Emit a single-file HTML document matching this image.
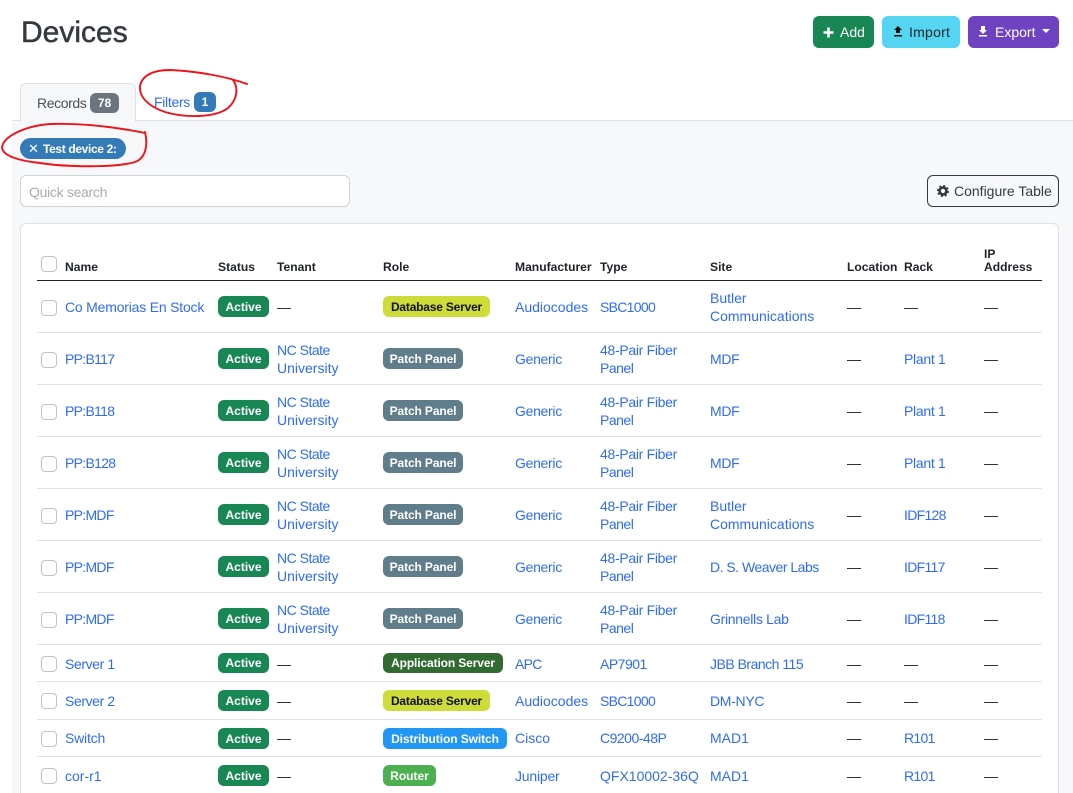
<!DOCTYPE html>
<html><head><meta charset="utf-8"><title>Devices</title>
<style>
html,body{margin:0;padding:0;background:#fff;overflow:hidden;height:793px;width:1073px}
body{position:relative;font:14px/18px "Liberation Sans",sans-serif;color:#343a40}
div,a,b,span{position:absolute;white-space:nowrap}
i{font-style:normal}
a{color:#2f6cf4;text-decoration:none}
.bg{left:12px;top:121px;width:1061px;height:672px;background:#f7f8fa}
.line{left:37px;width:1005px;height:1px;background:#dee2e6}
.cb{left:41px;width:14px;height:14px;border:1px solid #bfc3c8;border-radius:4px;background:#fff}
.th{font-weight:bold;font-size:12.1px;line-height:13px;color:#212529}
.bd{height:21px;line-height:22px;border-radius:6px;font-weight:bold;font-size:12px;color:#fff;text-align:center}
.ac{left:218px;width:51px;background:#198754}
.pp{left:383px;width:80px;background:#607d8b;letter-spacing:-.12px}
.db{left:383px;width:107px;background:#cddc39;color:#111;letter-spacing:-.2px}
.d{color:#212529}
.btn{height:32px;line-height:32px;top:16px;border-radius:6px;font-size:14px}
.s2{letter-spacing:-.2px}.s3{letter-spacing:-.3px}.s4{letter-spacing:-.4px}.s5{letter-spacing:-.5px}.s7{letter-spacing:-.7px}
</style></head><body>
<div class="bg"></div>
<div style="left:12px;top:120px;width:1061px;height:1px;background:#dee2e6"></div>
<div style="left:21px;top:5px;font-size:30px;line-height:56px;color:#343a40;-webkit-text-stroke:.5px #343a40">Devices</div>

<div class="btn" style="left:813px;width:61px;background:#198754;color:#fff"><svg style="position:absolute;left:10px;top:11px" width="11" height="11" viewBox="0 0 11 11"><path d="M5.5 .5V10.5M.5 5.5H10.5" stroke="#fff" stroke-width="2.6"/></svg><span style="left:27px;top:0">Add</span></div>
<div class="btn" style="left:882px;width:78px;background:#54d6f2;color:#212529"><svg style="position:absolute;left:11px;top:10px" width="10" height="12" viewBox="0 0 10 12"><path d="M5 0L9 4H7V7H3V4H1ZM1 9H9V10.5H1Z" fill="#111"/></svg><span style="left:27px;top:0;letter-spacing:.25px">Import</span></div>
<div class="btn" style="left:968px;width:91px;background:#6f42c1;color:#fff"><svg style="position:absolute;left:10px;top:10px" width="10" height="12" viewBox="0 0 10 12"><path d="M3 0H7V4H9L5 8L1 4H3ZM1 9H9V10.5H1Z" fill="#fff"/></svg><span style="left:27px;top:0">Export</span><span style="left:74px;top:13px;width:0;height:0;border:4px solid transparent;border-top:4px solid #fff;border-bottom:0"></span></div>

<div style="left:20px;top:83px;width:114px;height:38px;background:#f7f8fa;border:1px solid #dee2e6;border-bottom:0;border-radius:6px 6px 0 0"></div>
<span class="s4" style="left:37px;top:94px;color:#495057">Records</span>
<div class="bd" style="left:90px;top:93px;width:29px;height:20px;line-height:21px;background:#6c757d">78</div>
<a class="s3" style="left:154px;top:93px">Filters</a>
<div class="bd" style="left:194px;top:92px;width:22px;height:20px;line-height:21px;background:#337ab7">1</div>

<div class="bd" style="left:20px;top:138px;width:106px;height:21px;border-radius:11px;background:#337ab7"><span style="left:8px;top:0;font-weight:normal;font-size:13px">✕</span><span style="left:23px;top:0;letter-spacing:-.35px">Test device 2:</span></div>

<div style="left:20px;top:175px;width:328px;height:30px;background:#fff;border:1px solid #ced4da;border-radius:6px"><span class="s3" style="left:8px;top:7px;color:#a7adb3">Quick search</span></div>

<div style="left:927px;top:175px;width:130px;height:30px;border:1px solid #343a40;border-radius:6px;line-height:30px"><svg style="position:absolute;left:9px;top:9px" width="12" height="12" viewBox="0 0 12 12"><circle cx="6" cy="6" r="3.4" fill="none" stroke="#343a40" stroke-width="2.6"/><circle cx="6" cy="6" r="5" fill="none" stroke="#343a40" stroke-width="2" stroke-dasharray="2 1.93"/></svg><span style="left:26px;top:0">Configure Table</span></div>

<div style="left:20px;top:223px;width:1037px;height:600px;background:#fff;border:1px solid #dee2e6;border-radius:6px"></div>

<!-- header -->
<div class="cb" style="top:256px"></div>
<span class="th" style="left:65px;top:261px">Name</span>
<span class="th" style="left:218px;top:261px">Status</span>
<span class="th" style="left:277px;top:261px">Tenant</span>
<span class="th" style="left:383px;top:261px">Role</span>
<span class="th" style="left:515px;top:261px">Manufacturer</span>
<span class="th" style="left:600px;top:261px">Type</span>
<span class="th" style="left:710px;top:261px">Site</span>
<span class="th" style="left:847px;top:261px">Location</span>
<span class="th" style="left:904px;top:261px">Rack</span>
<span class="th" style="left:984px;top:248px">IP<br>Address</span>
<div class="line" style="top:280px;height:1px;background:#212529"></div>

<!-- row 1 -->
<div class="cb" style="top:300px"></div>
<a class="s2" style="left:65px;top:298px">Co Memorias En Stock</a>
<div class="bd ac" style="top:296px">Active</div>
<span class="d" style="left:277px;top:298px">—</span>
<div class="bd db" style="top:296px">Database Server</div>
<a style="left:515px;top:298px">Audiocodes</a>
<a class="s7" style="left:600px;top:298px">SBC1000</a>
<a style="left:710px;top:289px">Butler<br>Communications</a>
<span class="d" style="left:847px;top:298px">—</span>
<span class="d" style="left:904px;top:298px">—</span>
<span class="d" style="left:984px;top:298px">—</span>
<div class="line" style="top:332px"></div>

<!-- row 2 -->
<div class="cb" style="top:352px"></div>
<a class="s7" style="left:65px;top:350px">PP:B117</a>
<div class="bd ac" style="top:348px">Active</div>
<a style="left:277px;top:341px"><i class="s5">NC State</i><br>University</a>
<div class="bd pp" style="top:348px">Patch Panel</div>
<a class="s3" style="left:515px;top:350px">Generic</a>
<a class="s3" style="left:600px;top:341px">48-Pair Fiber<br><i class="s5">Panel</i></a>
<a class="s3" style="left:710px;top:350px">MDF</a>
<span class="d" style="left:847px;top:350px">—</span>
<a class="s3" style="left:904px;top:350px">Plant 1</a>
<span class="d" style="left:984px;top:350px">—</span>
<div class="line" style="top:384px"></div>

<!-- row 3 -->
<div class="cb" style="top:404px"></div>
<a class="s7" style="left:65px;top:402px">PP:B118</a>
<div class="bd ac" style="top:400px">Active</div>
<a style="left:277px;top:393px"><i class="s5">NC State</i><br>University</a>
<div class="bd pp" style="top:400px">Patch Panel</div>
<a class="s3" style="left:515px;top:402px">Generic</a>
<a class="s3" style="left:600px;top:393px">48-Pair Fiber<br><i class="s5">Panel</i></a>
<a class="s3" style="left:710px;top:402px">MDF</a>
<span class="d" style="left:847px;top:402px">—</span>
<a class="s3" style="left:904px;top:402px">Plant 1</a>
<span class="d" style="left:984px;top:402px">—</span>
<div class="line" style="top:436px"></div>

<!-- row 4 -->
<div class="cb" style="top:456px"></div>
<a class="s7" style="left:65px;top:454px">PP:B128</a>
<div class="bd ac" style="top:452px">Active</div>
<a style="left:277px;top:445px"><i class="s5">NC State</i><br>University</a>
<div class="bd pp" style="top:452px">Patch Panel</div>
<a class="s3" style="left:515px;top:454px">Generic</a>
<a class="s3" style="left:600px;top:445px">48-Pair Fiber<br><i class="s5">Panel</i></a>
<a class="s3" style="left:710px;top:454px">MDF</a>
<span class="d" style="left:847px;top:454px">—</span>
<a class="s3" style="left:904px;top:454px">Plant 1</a>
<span class="d" style="left:984px;top:454px">—</span>
<div class="line" style="top:488px"></div>

<!-- row 5 -->
<div class="cb" style="top:508px"></div>
<a class="s7" style="left:65px;top:506px">PP:MDF</a>
<div class="bd ac" style="top:504px">Active</div>
<a style="left:277px;top:497px"><i class="s5">NC State</i><br>University</a>
<div class="bd pp" style="top:504px">Patch Panel</div>
<a class="s3" style="left:515px;top:506px">Generic</a>
<a class="s3" style="left:600px;top:497px">48-Pair Fiber<br><i class="s5">Panel</i></a>
<a style="left:710px;top:497px">Butler<br>Communications</a>
<span class="d" style="left:847px;top:506px">—</span>
<a class="s7" style="left:904px;top:506px">IDF128</a>
<span class="d" style="left:984px;top:506px">—</span>
<div class="line" style="top:540px"></div>

<!-- row 6 -->
<div class="cb" style="top:560px"></div>
<a class="s7" style="left:65px;top:558px">PP:MDF</a>
<div class="bd ac" style="top:556px">Active</div>
<a style="left:277px;top:549px"><i class="s5">NC State</i><br>University</a>
<div class="bd pp" style="top:556px">Patch Panel</div>
<a class="s3" style="left:515px;top:558px">Generic</a>
<a class="s3" style="left:600px;top:549px">48-Pair Fiber<br><i class="s5">Panel</i></a>
<a class="s5" style="left:710px;top:558px">D. S. Weaver Labs</a>
<span class="d" style="left:847px;top:558px">—</span>
<a class="s7" style="left:904px;top:558px">IDF117</a>
<span class="d" style="left:984px;top:558px">—</span>
<div class="line" style="top:592px"></div>

<!-- row 7 -->
<div class="cb" style="top:612px"></div>
<a class="s7" style="left:65px;top:610px">PP:MDF</a>
<div class="bd ac" style="top:608px">Active</div>
<a style="left:277px;top:601px"><i class="s5">NC State</i><br>University</a>
<div class="bd pp" style="top:608px">Patch Panel</div>
<a class="s3" style="left:515px;top:610px">Generic</a>
<a class="s3" style="left:600px;top:601px">48-Pair Fiber<br><i class="s5">Panel</i></a>
<a class="s3" style="left:710px;top:610px">Grinnells Lab</a>
<span class="d" style="left:847px;top:610px">—</span>
<a class="s7" style="left:904px;top:610px">IDF118</a>
<span class="d" style="left:984px;top:610px">—</span>
<div class="line" style="top:644px"></div>

<!-- row 8 -->
<div class="cb" style="top:656px"></div>
<a class="s4" style="left:65px;top:655px">Server 1</a>
<div class="bd ac" style="top:653px;height:20px;line-height:21px">Active</div>
<span class="d" style="left:277px;top:655px">—</span>
<div class="bd" style="left:383px;top:653px;width:120px;height:20px;line-height:21px;background:#316b31;letter-spacing:-.12px">Application Server</div>
<a class="s7" style="left:515px;top:655px">APC</a>
<a class="s5" style="left:600px;top:655px">AP7901</a>
<a class="s5" style="left:710px;top:655px">JBB Branch 115</a>
<span class="d" style="left:847px;top:655px">—</span>
<span class="d" style="left:904px;top:655px">—</span>
<span class="d" style="left:984px;top:655px">—</span>
<div class="line" style="top:681px"></div>

<!-- row 9 -->
<div class="cb" style="top:693px"></div>
<a class="s4" style="left:65px;top:692px">Server 2</a>
<div class="bd ac" style="top:690px">Active</div>
<span class="d" style="left:277px;top:692px">—</span>
<div class="bd db" style="top:690px">Database Server</div>
<a style="left:515px;top:692px">Audiocodes</a>
<a class="s7" style="left:600px;top:692px">SBC1000</a>
<a class="s3" style="left:710px;top:692px">DM-NYC</a>
<span class="d" style="left:847px;top:692px">—</span>
<span class="d" style="left:904px;top:692px">—</span>
<span class="d" style="left:984px;top:692px">—</span>
<div class="line" style="top:719px"></div>

<!-- row 10 -->
<div class="cb" style="top:731px"></div>
<a class="s2" style="left:65px;top:729px">Switch</a>
<div class="bd ac" style="top:728px">Active</div>
<span class="d" style="left:277px;top:729px">—</span>
<div class="bd" style="left:383px;top:728px;width:124px;background:#2196f3;letter-spacing:-.08px">Distribution Switch</div>
<a style="left:515px;top:729px">Cisco</a>
<a class="s5" style="left:600px;top:729px">C9200-48P</a>
<a style="left:710px;top:729px">MAD1</a>
<span class="d" style="left:847px;top:729px">—</span>
<a class="s7" style="left:904px;top:729px">R101</a>
<span class="d" style="left:984px;top:729px">—</span>
<div class="line" style="top:756px"></div>

<!-- row 11 -->
<div class="cb" style="top:768px"></div>
<a style="left:65px;top:767px">cor-r1</a>
<div class="bd ac" style="top:765px">Active</div>
<span class="d" style="left:277px;top:767px">—</span>
<div class="bd" style="left:383px;top:765px;width:53px;background:#4caf50">Router</div>
<a class="s2" style="left:515px;top:767px">Juniper</a>
<a style="left:600px;top:767px">QFX10002-36Q</a>
<a style="left:710px;top:767px">MAD1</a>
<span class="d" style="left:847px;top:767px">—</span>
<a class="s7" style="left:904px;top:767px">R101</a>
<span class="d" style="left:984px;top:767px">—</span>

<svg style="position:absolute;left:0;top:0" width="1073" height="793" fill="none" stroke="#ee1219" stroke-width="1.9" stroke-linecap="round">
<path d="M247 84C225 76 195 71 170 70C152 70 142 76 140 86C139 98 150 107 165 112C185 118 215 118 228 108C237 100 239 88 233 80"/>
<path d="M145 133C115 127 80 123 50 124C25 126 4 136 2 147C2 156 20 161 40 163C65 167 115 168 135 162C146 158 148 145 145 132"/>
</svg>
</body></html>
